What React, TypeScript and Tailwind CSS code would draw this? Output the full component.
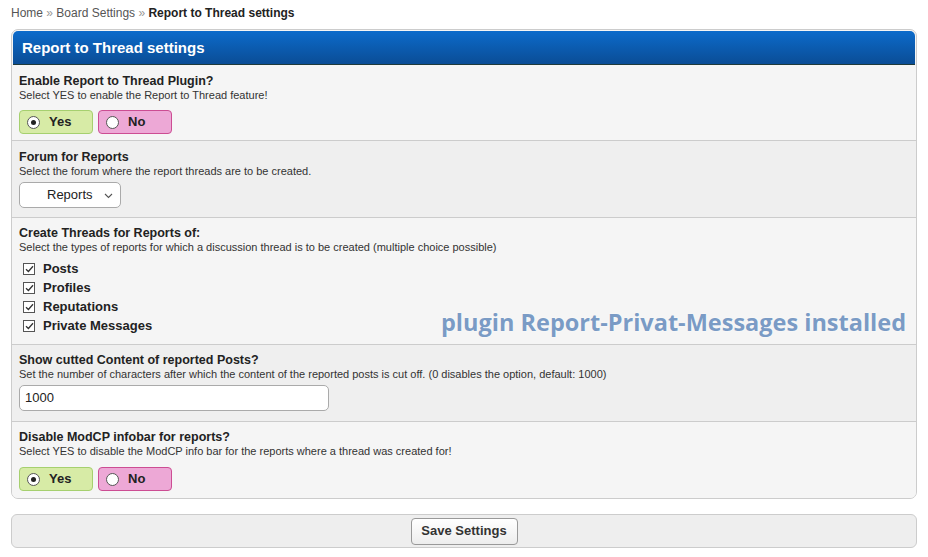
import React from "react";

const FONT = { fontFamily: '"Liberation Sans", Arial, sans-serif' };

function Radio({ on }: { on: boolean }) {
  return (
    <span className="flex h-[13px] w-[13px] items-center justify-center rounded-full border border-[#555] bg-white">
      {on && <span className="h-[5px] w-[5px] rounded-full bg-[#222]" />}
    </span>
  );
}

function YesNo({ yes, tight }: { yes: boolean; tight?: boolean }) {
  return (
    <div className={tight ? "mt-[8px] flex gap-[5px]" : "mt-[9px] flex gap-[5px]"}>
      <label className="flex h-[24px] w-[74px] items-center gap-[9px] rounded-[4px] border border-[#a6d06f] bg-[#d7eba6] pl-[7px] text-[13px] font-bold text-[#222]">
        <Radio on={yes} />
        Yes
      </label>
      <label className="flex h-[24px] w-[74px] items-center gap-[9px] rounded-[4px] border border-[#cc4d93] bg-[#eda8d6] pl-[7px] text-[13px] font-bold text-[#222]">
        <Radio on={!yes} />
        No
      </label>
    </div>
  );
}

function Head({ title, desc }: { title: string; desc: string }) {
  return (
    <>
      <div className="text-[12.5px] leading-[16px] font-bold text-[#222]">{title}</div>
      <div className="text-[11px] leading-[13px] text-[#333]">{desc}</div>
    </>
  );
}

function Check({ label }: { label: string }) {
  return (
    <div className="flex h-[19px] items-center gap-[8px] pl-[4px]">
      <span className="flex h-[12px] w-[12px] items-center justify-center border border-[#555] bg-white">
        <svg width="9" height="8" viewBox="0 0 9 8">
          <path d="M1 4.2 L3.4 6.5 L8 1.2" fill="none" stroke="#333" strokeWidth="1.3" />
        </svg>
      </span>
      <span className="text-[13px] font-bold text-[#222]">{label}</span>
    </div>
  );
}

export default function App() {
  return (
    <div className="min-h-[557px] w-[928px] bg-white text-[#333]" style={FONT}>
      <div className="px-[11px] pt-[5px]">
        <div className="h-[17px] text-[12px] leading-[17px] text-[#555]">
          Home <span className="text-[#999]">»</span> Board Settings <span className="text-[#999]">»</span>{" "}
          <span className="font-bold text-[#222]">Report to Thread settings</span>
        </div>

        <div className="mt-[7px] overflow-hidden rounded-[7px] border border-[#ccc] bg-[#f5f5f5]">
          <div className="m-[1px] mb-0 flex h-[34px] items-center rounded-t-[5px] border-b border-[#1f3a3a] bg-gradient-to-b from-[#0c6bcb] to-[#0a4d96] pt-[2px] pl-[9px] text-[15px] font-bold text-white">
            Report to Thread settings
          </div>

          <div className="border-b border-[#ccc] bg-[#f5f5f5] px-[7px] pt-[8px] pb-[6px]">
            <Head title="Enable Report to Thread Plugin?" desc="Select YES to enable the Report to Thread feature!" />
            <YesNo yes tight />
          </div>

          <div className="border-b border-[#ccc] bg-[#efefef] px-[7px] pt-[8px] pb-[9px]">
            <Head title="Forum for Reports" desc="Select the forum where the report threads are to be created." />
            <div className="relative mt-[4px] flex h-[26px] w-[102px] items-center rounded-[5px] border border-[#aaa] bg-white pl-[27px] text-[13px] text-[#222]">
              Reports
              <svg className="absolute right-[7px] top-[10px]" width="9" height="6" viewBox="0 0 9 6">
                <path d="M1 1 L4.5 4.5 L8 1" fill="none" stroke="#555" strokeWidth="1.1" />
              </svg>
            </div>
          </div>

          <div className="border-b border-[#ccc] bg-[#f5f5f5] px-[7px] pt-[7px] pb-[9px]">
            <Head
              title="Create Threads for Reports of:"
              desc="Select the types of reports for which a discussion thread is to be created (multiple choice possible)"
            />
            <div className="mt-[5px] flex items-end justify-between">
              <div>
                <Check label="Posts" />
                <Check label="Profiles" />
                <Check label="Reputations" />
                <Check label="Private Messages" />
              </div>
              <div
                className="pr-[3px] text-[23.5px] leading-[26px] font-bold text-[#7a9bc5] [text-shadow:0_0_2px_#fff]"
                style={{ fontFamily: '"Open Sans", sans-serif' }}
              >
                plugin Report-Privat-Messages installed
              </div>
            </div>
          </div>

          <div className="border-b border-[#ccc] bg-[#efefef] px-[7px] pt-[7px] pb-[10px]">
            <Head
              title="Show cutted Content of reported Posts?"
              desc="Set the number of characters after which the content of the reported posts is cut off. (0 disables the option, default: 1000)"
            />
            <div className="mt-[4px] flex h-[26px] w-[310px] items-center rounded-[5px] border border-[#aaa] bg-white pl-[5px] text-[13px] text-[#222]">
              1000
            </div>
          </div>

          <div className="bg-[#f5f5f5] px-[7px] pt-[7px] pb-[7px]">
            <Head
              title="Disable ModCP infobar for reports?"
              desc="Select YES to disable the ModCP info bar for the reports where a thread was created for!"
            />
            <YesNo yes />
          </div>
        </div>

        <div className="mt-[15px] flex h-[34px] items-center justify-center rounded-[6px] border border-[#ccc] bg-[#eee]">
          <button className="h-[27px] w-[107px] rounded-[4px] border border-[#999] bg-gradient-to-b from-white to-[#ededed] text-[13px] font-bold text-[#333]">
            Save Settings
          </button>
        </div>
      </div>
    </div>
  );
}
